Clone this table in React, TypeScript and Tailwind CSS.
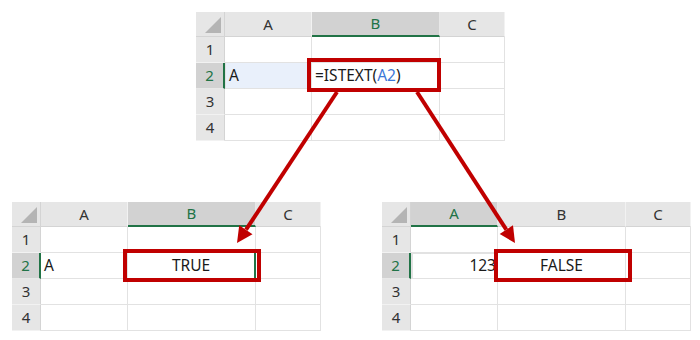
import React from 'react';

type Col = { key: string; width: string };

const COLS: Col[] = [
  { key: 'A', width: 'w-[87px]' },
  { key: 'B', width: 'w-[128px]' },
  { key: 'C', width: 'w-[65px]' },
];

interface SheetProps {
  selCol: string;
  // contents of row 2, keyed by column
  row2: Record<string, React.ReactNode>;
  cellClass?: Record<string, string>;
}

const Sheet = ({ selCol, row2, cellClass = {} }: SheetProps) => {
  return (
    <div className="flex flex-col w-[309px] text-[15.5px] text-[#1a1a1a]" style={{ fontFamily: '"Noto Sans", "Open Sans", sans-serif' }}>
      {/* Column headers */}
      <div className="flex h-[25px]">
        <div className="relative w-[29px] shrink-0 bg-[#e6e6e6] border-r border-b border-[#d4d4d4]">
          <svg className="absolute right-[3px] bottom-[3px]" width="16" height="16" viewBox="0 0 16 16">
            <polygon points="16,0 16,16 0,16" fill="#b4b4b4" />
          </svg>
        </div>
        {COLS.map((c) => {
          const sel = c.key === selCol;
          return (
            <div
              key={c.key}
              className={
                sel
                  ? `${c.width} shrink-0 flex items-center justify-center bg-[#d2d2d2] text-[#217346] border-r border-[#e8e8e8] border-b-2 border-b-[#217346] text-[15px]`
                  : `${c.width} shrink-0 flex items-center justify-center bg-[#e6e6e6] text-[#333] border-r border-[#f2f2f2] border-b border-b-[#d4d4d4] text-[15px]`
              }
            >
              {c.key}
            </div>
          );
        })}
      </div>

      {/* Rows */}
      {[1, 2, 3, 4].map((r) => {
        const sel = r === 2;
        return (
          <div key={r} className="flex h-[26px]">
            <div
              className={
                sel
                  ? 'w-[29px] shrink-0 flex items-center justify-center bg-[#d2d2d2] text-[#217346] border-r-2 border-[#217346] border-b border-b-[#e8e8e8] text-[15px]'
                  : 'w-[29px] shrink-0 flex items-center justify-center bg-[#e6e6e6] text-[#333] border-r border-[#d4d4d4] border-b border-b-[#f2f2f2] text-[15px]'
              }
            >
              {r}
            </div>
            {COLS.map((c) => (
              <div
                key={c.key}
                className={`${c.width} shrink-0 flex items-center border-r border-b border-[#e2e2e2] ${
                  sel ? cellClass[c.key] ?? 'px-[3px]' : ''
                }`}
              >
                {sel ? row2[c.key] : null}
              </div>
            ))}
          </div>
        );
      })}
    </div>
  );
};

const RED = '#c00000';

export default function App() {
  return (
    <div className="relative w-[700px] h-[340px] bg-white overflow-hidden">
      {/* Formula sheet */}
      <div className="flex pl-[196px] pt-[12px]">
        <Sheet
          selCol="B"
          row2={{
            A: 'A',
            B: (
              <span>
                =ISTEXT(<span className="text-[#3c78d8]">A2</span>)
              </span>
            ),
          }}
          cellClass={{
            A: 'px-[3px] bg-[#e9f0fb] border border-[#6d9be6] -mt-px',
            B: 'px-[3px]',
            C: '',
          }}
        />
      </div>

      {/* Result sheets */}
      <div className="flex gap-[61px] pl-[12px] pt-[61px]">
        <Sheet
          selCol="B"
          row2={{ A: 'A', B: 'TRUE' }}
          cellClass={{
            A: 'px-[3px]',
            B: 'justify-center border-r-2 border-r-[#217346]',
            C: '',
          }}
        />
        <Sheet
          selCol="A"
          row2={{ A: '123', B: 'FALSE' }}
          cellClass={{
            A: 'justify-end pr-[1px] border-2 border-[#217346] -mt-px',
            B: 'justify-center',
            C: '',
          }}
        />
      </div>

      {/* Callouts */}
      <svg className="absolute inset-0 pointer-events-none" width="700" height="340" viewBox="0 0 700 340">
        <rect x="309" y="60" width="130" height="30" fill="none" stroke={RED} strokeWidth="4" />
        <rect x="125" y="251" width="134" height="29" fill="none" stroke={RED} strokeWidth="4" />
        <rect x="496" y="251" width="134" height="29" fill="none" stroke={RED} strokeWidth="4" />

        <line x1="337" y1="92" x2="246" y2="229.7" stroke={RED} strokeWidth="4" />
        <polygon points="237,243 252.5,234.2 239.2,225.3" fill={RED} />

        <line x1="417" y1="92" x2="506.3" y2="229.6" stroke={RED} strokeWidth="4" />
        <polygon points="515,243 513,225.3 499.7,234" fill={RED} />
      </svg>
    </div>
  );
}
